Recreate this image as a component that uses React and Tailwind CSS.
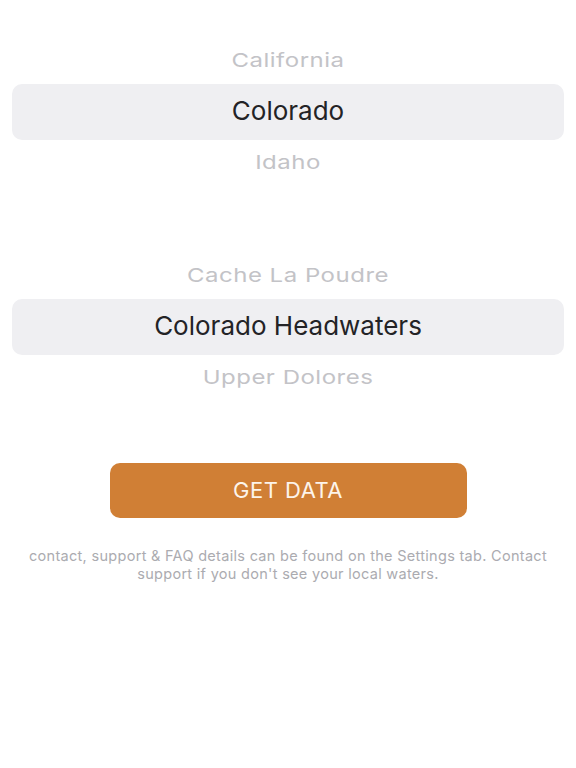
const STATES = { prev: "California", current: "Colorado", next: "Idaho" };
const WATERS = {
  prev: "Cache La Poudre",
  current: "Colorado Headwaters",
  next: "Upper Dolores",
};

function Wheel({ items }) {
  return (
    <div className="flex flex-col">
      <div className="flex h-[46px] items-center justify-center">
        <span className="origin-center scale-y-[0.8] text-[24px] tracking-[0.5px] text-[#c3c3c7]">
          {items.prev}
        </span>
      </div>
      <div className="mx-3 flex h-[56px] items-center justify-center rounded-[10px] bg-[#efeff2] pb-[3px]">
        <span className="text-[26px] text-[#232326]">{items.current}</span>
      </div>
      <div className="flex h-[46px] items-center justify-center">
        <span className="origin-center scale-y-[0.8] text-[24px] tracking-[0.5px] text-[#c3c3c7]">
          {items.next}
        </span>
      </div>
    </div>
  );
}

export default function App() {
  return (
    <div
      className="flex min-h-[768px] w-full flex-col bg-white pt-[38px]"
      style={{ fontFamily: "Inter, 'Noto Sans', sans-serif" }}
    >
      <Wheel items={STATES} />
      <div className="h-[67px]" />
      <Wheel items={WATERS} />

      <div className="mt-[62px] flex justify-center">
        <button className="flex h-[55px] w-[357px] items-center justify-center rounded-[10px] bg-[#d07f35] text-[22px] tracking-[0.5px] text-[#fdf4ea]">
          GET DATA
        </button>
      </div>

      <p className="mx-auto mt-[29px] w-[540px] text-center text-[14.5px] leading-[18px] tracking-[0.3px] text-[#ababb0]">
        contact, support &amp; FAQ details can be found on the Settings tab.
        Contact support if you don't see your local waters.
      </p>
    </div>
  );
}
